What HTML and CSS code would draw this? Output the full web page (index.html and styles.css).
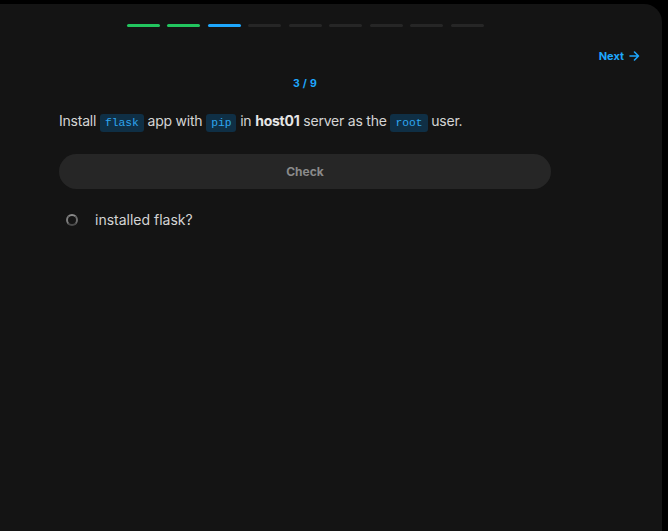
FILE: index.html
```
<!DOCTYPE html>
<html>
<head>
<meta charset="utf-8">
<link rel="stylesheet" href="styles.css">
</head>
<body>
<div class="panel">
  <div class="progress">
    <span class="seg done"></span>
    <span class="seg done"></span>
    <span class="seg current"></span>
    <span class="seg"></span>
    <span class="seg"></span>
    <span class="seg"></span>
    <span class="seg"></span>
    <span class="seg"></span>
    <span class="seg"></span>
  </div>
  <div class="nav">
    <a class="next">Next
      <svg width="11" height="10" viewBox="0 0 11 10" fill="none" stroke="currentColor" stroke-width="1.6" stroke-linecap="round" stroke-linejoin="round"><path d="M1 5h8.5M5.5 1l4 4-4 4"/></svg>
    </a>
  </div>
  <div class="column">
    <div class="counter">3 / 9</div>
    <p class="question">Install <code>flask</code> app with <code>pip</code> in <b>host01</b> server as the <code>root</code> user.</p>
    <button class="check">Check</button>
    <ul class="tasks">
      <li class="task"><span class="radio"></span>installed flask?</li>
    </ul>
  </div>
</div>
</body>
</html>
```
FILE: styles.css
```
html, body {
  margin: 0;
  background: #000;
  height: 100%;
  overflow: hidden;
}
body {
  font-family: Inter, "Noto Sans", sans-serif;
  color: #d4d4d4;
}
.panel {
  margin-top: 4px;
  width: 662px;
  height: 527px;
  background: #141414;
  border-top-right-radius: 18px;
  box-sizing: border-box;
  padding: 20px 22px 0 59px;
}
.progress {
  width: 492px;
  display: flex;
  justify-content: center;
  gap: 7.5px;
}
.seg {
  width: 33px;
  height: 3px;
  border-radius: 2px;
  background: #262626;
}
.seg.done { background: #22c55e; }
.seg.current { background: #1ea7fd; }
.nav {
  margin-top: 21px;
  display: flex;
  justify-content: flex-end;
  height: 16px;
}
.next {
  display: flex;
  align-items: center;
  gap: 5px;
  font-size: 11px;
  font-weight: 700;
  color: #1ea7fd;
  line-height: 16px;
}
.column {
  width: 492px;
}
.counter {
  margin-top: 13px;
  text-align: center;
  font-size: 10.5px;
  font-weight: 700;
  line-height: 14px;
  color: #1ea7fd;
  letter-spacing: 0.3px;
}
.question {
  margin: 20px 0 0;
  font-size: 14px;
  line-height: 20px;
  letter-spacing: -0.22px;
  color: #d4d4d4;
}
.question b { font-weight: 700; color: #e6e6e6; }
.question code {
  font-family: "Liberation Mono", "DejaVu Sans Mono", monospace;
  font-size: 11.3px;
  letter-spacing: 0;
  color: #2ea6ef;
  background: #0f2f45;
  padding: 3px 5px;
  border-radius: 3px;
}
.check {
  margin-top: 21px;
  width: 492px;
  height: 35px;
  border: none;
  border-radius: 18px;
  background: #262626;
  color: #8a8a8a;
  font-family: Inter, sans-serif;
  font-size: 12px;
  font-weight: 700;
  display: block;
}
.tasks {
  list-style: none;
  margin: 21px 0 0;
  padding: 0;
}
.task {
  display: flex;
  align-items: center;
  font-size: 14px;
  line-height: 20px;
  color: #d4d4d4;
}
.radio {
  width: 8px;
  height: 8px;
  border-radius: 50%;
  border: 2.5px solid #6b6b6b;
  border-top-color: #8a8a8a;
  border-left-color: #7c7c7c;
  border-bottom-color: #4a4a4a;
  margin: 0 17px 0 7px;
}
```
